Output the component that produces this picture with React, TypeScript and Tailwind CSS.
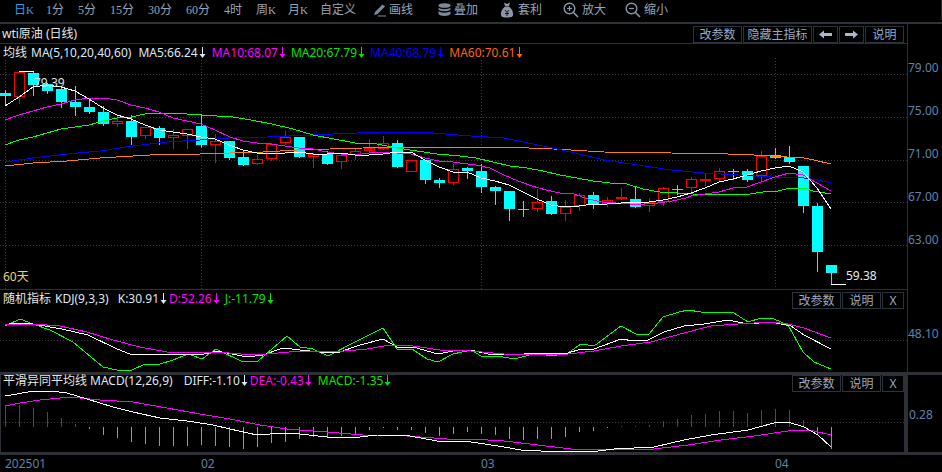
import React from "react";

type P = [number, number];

// [high, low, top, bottom, red?]
const C: [number, number, number, number, number][] = [
  [90,105,93,96,0],[72,104,72,97,1],[71,96,73,85,0],[83,94,84,91,0],[86,108,89,102,0],
  [86,116,102,107,0],[100,114,107,112,0],[106,126,112,124,0],[115,127,121,124,1],[115,145,121,137,0],
  [127,139,127,136,1],[126,145,128,138,0],[129,149,135,138,1],[129,149,129,136,1],[114,148,126,145,0],
  [134,163,141,145,1],[141,160,141,158,0],[150,166,157,165,0],[155,165,159,164,1],[143,161,144,159,1],
  [131,145,137,143,1],[137,158,137,157,0],[153,168,154,157,1],[151,165,154,164,0],[155,169,155,162,1],
  [148,160,151,155,1],[139,152,148,151,1],[136,150,143,149,1],[140,168,143,167,0],[160,172,160,172,1],
  [160,184,160,180,0],[178,188,180,183,0],[164,185,169,183,1],[167,179,168,171,0],[164,193,171,187,0],
  [186,205,187,191,0],[191,221,191,209,0],[201,217,209,210,0],[189,212,202,209,1],[196,215,201,214,0],
  [200,221,207,214,1],[193,211,195,206,1],[192,209,195,204,0],[197,207,200,204,1],[188,200,197,199,1],
  [186,208,199,207,0],[198,212,202,206,1],[187,206,188,202,1],[185,195,189,190,0],[177,193,179,188,1],
  [174,186,179,180,1],[168,182,171,179,1],[169,180,171,172,0],[169,182,171,180,0],[151,182,156,176,1],
  [148,159,155,158,0],[146,164,157,162,0],[166,213,166,206,0],[203,272,206,252,0],[265,284,265,273,0],
];

const MA5: P[] = [[5,106],[19,97],[33,87],[47,85],[61,87],[75,91],[89,99],[103,108],[117,115],[131,119],[145,125],[159,130],[173,132],[187,134],[201,137],[215,139],[229,145],[243,150],[257,153],[271,153],[285,153],[299,152],[313,154],[327,154],[341,153],[355,155],[369,155],[383,154],[397,152],[411,152],[425,160],[439,167],[453,172],[467,172],[481,178],[495,181],[509,185],[523,192],[537,199],[551,205],[565,207],[579,206],[593,204],[607,204],[621,203],[635,202],[649,202],[663,200],[677,197],[691,193],[705,188],[719,182],[733,179],[747,175],[761,171],[775,168],[789,166],[803,172],[817,188],[831,209]];
const MA10: P[] = [[5,120],[19,115],[33,111],[47,107],[61,104],[75,100],[89,98],[103,98],[117,100],[131,105],[145,108],[159,112],[173,118],[187,121],[201,124],[215,130],[230,137],[243,141],[257,143],[271,144],[285,146],[299,148],[313,149],[327,152],[341,154],[355,155],[369,153],[383,152],[397,153],[411,154],[425,158],[439,161],[453,162],[460,163],[476,165],[490,168],[504,175],[518,181],[532,186],[546,190],[560,193],[574,194],[588,199],[602,202],[616,203],[630,204],[644,204],[658,203],[672,201],[686,198],[691,196],[705,194],[719,192],[733,188],[747,187],[761,182],[775,177],[789,173],[803,175],[817,183],[831,191]];
const MA20: P[] = [[5,145],[19,140],[33,137],[47,133],[61,129],[75,127],[89,125],[103,121],[117,118],[131,117],[145,114],[159,113],[173,113],[201,115],[233,117],[251,120],[272,124],[293,129],[313,135],[334,139],[355,143],[377,144],[397,148],[417,151],[437,154],[460,156],[476,158],[493,162],[510,166],[527,168],[543,171],[560,175],[577,178],[593,181],[610,183],[627,184],[643,189],[660,192],[677,193],[693,194],[727,194],[750,194],[763,192],[778,191],[790,188],[805,188],[813,191],[831,194]];
const MA40: P[] = [[5,162],[33,158],[67,154],[100,151],[133,146],[167,142],[200,140],[230,138],[267,137],[333,134],[383,132],[433,133],[471,136],[504,138],[538,145],[571,152],[604,160],[638,165],[671,170],[704,173],[738,175],[771,177],[804,178],[818,180],[831,183]];
const MA60: P[] = [[5,166],[33,163],[67,161],[100,158],[133,156],[167,154],[200,154],[230,153],[263,152],[297,150],[330,149],[363,148],[397,147],[430,147],[471,147],[504,147],[554,149],[604,152],[671,153],[728,154],[754,155],[804,158],[814,160],[831,164]];

const K: P[] = [[5,325],[13,323],[33,324],[62,329],[88,335],[117,349],[130,354],[143,354],[160,355],[187,354],[200,355],[217,351],[247,357],[263,355],[283,348],[300,350],[320,352],[337,353],[360,345],[383,339],[397,347],[413,347],[438,354],[453,351],[471,350],[488,354],[514,355],[524,354],[538,353],[554,354],[568,353],[581,349],[594,349],[621,339],[634,341],[648,340],[664,332],[684,326],[704,324],[728,320],[748,324],[771,322],[791,326],[804,335],[831,349]];
const D: P[] = [[5,324],[33,324],[60,326],[87,332],[113,340],[140,347],[167,352],[200,353],[217,352],[253,355],[267,354],[300,351],[333,352],[367,349],[390,345],[413,346],[440,350],[471,351],[504,354],[531,354],[568,354],[594,351],[621,346],[651,342],[684,333],[711,326],[738,324],[771,322],[788,324],[804,328],[831,338]];
const J: P[] = [[5,326],[20,319],[33,324],[50,330],[73,342],[103,367],[117,370],[132,370],[145,364],[160,364],[173,360],[188,354],[202,359],[216,349],[243,362],[258,361],[287,336],[300,347],[313,349],[328,356],[357,341],[383,328],[397,349],[412,349],[427,359],[438,362],[453,354],[471,350],[481,356],[498,356],[514,359],[526,356],[536,353],[551,356],[568,353],[581,344],[594,346],[621,326],[636,334],[649,334],[663,317],[679,312],[688,310],[701,312],[728,312],[734,313],[748,322],[761,318],[774,319],[788,325],[803,352],[814,362],[831,369]];

const DIFF: P[] = [[5,396],[17,394],[33,391],[50,391],[67,393],[87,399],[113,407],[133,412],[160,418],[187,421],[213,425],[230,429],[257,435],[283,433],[300,434],[327,437],[360,437],[377,435],[410,436],[437,441],[471,442],[498,446],[521,450],[541,451],[598,451],[614,449],[654,447],[684,440],[711,435],[748,430],[774,423],[788,422],[804,427],[818,435],[831,447]];
const DEA: P[] = [[5,406],[20,403],[40,400],[70,397],[100,400],[133,402],[167,408],[200,414],[230,419],[260,425],[287,429],[327,432],[363,435],[393,435],[420,437],[447,439],[471,439],[504,441],[538,445],[571,449],[621,449],[654,449],[688,445],[721,440],[754,436],[788,431],[804,430],[814,431],[831,435]];
const BAR_BOT = [406,405,408,412,418,424,429,435,438,442,444,446,446,446,445,446,447,449,447,443,442,439,437,437,436,434,430,428,430,430,433,436,434,432,434,435,439,440,439,439,437,432,431,428,426,426,425,421,419,415,414,411,411,413,410,409,410,420,435,449];

const cx = (i: number) => Math.floor(5.67 + 14 * i);

function Line({ pts, color }: { pts: P[]; color: string }) {
  return <polyline points={pts.map((p) => p.join(",")).join(" ")} fill="none" stroke={color} strokeWidth={1} shapeRendering="crispEdges" />;
}

function Grid({ y }: { y: number }) {
  return <line x1={0} x2={907} y1={y + 0.5} y2={y + 0.5} stroke="#3a3a3a" strokeDasharray="1 2" />;
}

function VGrid({ x, y1, y2 }: { x: number; y1: number; y2: number }) {
  return <line x1={x + 0.5} x2={x + 0.5} y1={y1} y2={y2} stroke="#3a3a3a" strokeDasharray="1 2" />;
}

function Btns({ items }: { items: { t: React.ReactNode; w: string }[] }) {
  return (
    <div className="flex gap-[1px] h-[17px]">
      {items.map((b, i) => (
        <div key={i} className={`${b.w} h-[17px] border border-[#2b323c] flex items-center justify-center text-[12px] leading-none text-[#9aa9c2]`}>
          {b.t}
        </div>
      ))}
    </div>
  );
}

function Arrow({ dir }: { dir: "l" | "r" }) {
  return (
    <svg width="13" height="9" viewBox="0 0 13 9">
      <path d={dir === "l" ? "M0 4.5L5 0.5V3H13V6H5V8.5Z" : "M13 4.5L8 0.5V3H0V6H8V8.5Z"} fill="#a9b6cc" />
    </svg>
  );
}

function Dn() {
  return (
    <svg width="7" height="11" viewBox="0 0 7 11" className="inline-block ml-[1px] align-[-1px]">
      <path d="M3 0H4V7H6.5L3.5 11L0.5 7H3Z" fill="currentColor" />
    </svg>
  );
}

const tabs: [string, string, string, boolean?][] = [
  ["日", "K", "w-[46px] pl-[14px]", true],
  ["1分", "", "w-[32px]"],
  ["5分", "", "w-[32px]"],
  ["15分", "", "w-[38px]"],
  ["30分", "", "w-[38px]"],
  ["60分", "", "w-[38px]"],
  ["4时", "", "w-[32px]"],
  ["周", "K", "w-[32px]"],
  ["月", "K", "w-[32px]"],
  ["自定义", "", "w-[53px]"],
];

function Tool({ icon, t, w }: { icon: React.ReactNode; t: string; w: string }) {
  return (
    <div className={`flex items-center whitespace-nowrap ${w}`}>
      {icon}
      <span>{t}</span>
    </div>
  );
}

const Pencil = (
  <svg width="14" height="14" viewBox="0 0 14 14" className="mr-[2px]">
    <path d="M1 12L2 9L9.5 1.5L12 3.5L4.5 11L1 12Z" fill="#7d8a9c" />
    <path d="M5 13H13" stroke="#7d8a9c" strokeWidth="1" />
  </svg>
);
const Stack = (
  <svg width="13" height="14" viewBox="0 0 13 14" className="mr-[3px]">
    <ellipse cx="6.5" cy="2.5" rx="6" ry="2.3" fill="#7d8a9c" />
    <path d="M0.5 4.5C2 6.8 11 6.8 12.5 4.5V6.5C11 8.8 2 8.8 0.5 6.5Z" fill="#7d8a9c" />
    <path d="M0.5 8C2 10.3 11 10.3 12.5 8V11C11 13.6 2 13.6 0.5 11Z" fill="#7d8a9c" />
  </svg>
);
const Bag = (
  <svg width="14" height="16" viewBox="0 0 14 16" className="mr-[4px]">
    <path d="M4 0.5L7 2L10 0.5L9 4H5Z" fill="#8b97a8" />
    <path d="M5 4.5H9C12 7 13.5 10 13 13C12.7 15 11 15.5 7 15.5C3 15.5 1.3 15 1 13C0.5 10 2 7 5 4.5Z" fill="#8b97a8" />
    <path d="M5 8L7 10.5L9 8M7 10.5V14M5 11.5H9" stroke="#111" strokeWidth="1" fill="none" />
  </svg>
);
const Mag = ({ plus }: { plus: boolean }) => (
  <svg width="16" height="16" viewBox="0 0 16 16" className="mr-[3px]">
    <circle cx="6.5" cy="6.5" r="5.3" fill="none" stroke="#8b97a8" strokeWidth="1.4" />
    <path d="M10.5 10.5L15 15" stroke="#8b97a8" strokeWidth="1.6" />
    <path d="M4 6.5H9" stroke="#8b97a8" strokeWidth="1.2" />
    {plus && <path d="M6.5 4V9" stroke="#8b97a8" strokeWidth="1.2" />}
  </svg>
);

export default function App() {
  return (
    <div className="w-[942px] h-[472px] bg-black overflow-hidden flex flex-col font-['Noto_Sans','Noto_Sans_CJK_SC',sans-serif]">
      {/* toolbar */}
      <div className="h-[24px] shrink-0 border-b-2 border-[#2e3238] flex items-center text-[12px] text-[#9aa4b5] leading-none pb-[2px] whitespace-nowrap">
        {tabs.map(([t, k, w, a], i) => (
          <div key={i} className={`${w} font-['Liberation_Serif','Noto_Sans_CJK_SC',serif] ${a ? "text-[#2f9be8]" : ""}`}>
            {t}
            {k && <span className="text-[11px]">{k}</span>}
          </div>
        ))}
        <Tool icon={Pencil} t="画线" w="w-[65px]" />
        <Tool icon={Stack} t="叠加" w="w-[62px]" />
        <Tool icon={Bag} t="套利" w="w-[63px]" />
        <Tool icon={<Mag plus />} t="放大" w="w-[62px]" />
        <Tool icon={<Mag plus={false} />} t="缩小" w="w-[50px]" />
        <div className="ml-auto w-[1px] h-[20px] bg-[#2a2a2a]" />
      </div>

      {/* main row */}
      <div className="flex h-[266px] shrink-0">
        <div className="w-[907px] flex flex-col">
          <div className="h-[20px] border-b border-[#2b2f36] flex items-start justify-between pt-[2px] pr-[3px] pl-[2px] shrink-0">
            <span className="text-[12px] leading-[15px] text-[#e6e6e6]">wti原油 (日线)</span>
            <Btns items={[
              { t: "改参数", w: "w-[49px]" },
              { t: "隐藏主指标", w: "w-[69px]" },
              { t: <Arrow dir="l" />, w: "w-[25px]" },
              { t: <Arrow dir="r" />, w: "w-[25px]" },
              { t: "说明", w: "w-[39px]" },
            ]} />
          </div>
          <div className="relative h-[246px] border-b border-[#2b2f36]">
            <svg width="907" height="245" viewBox="0 44 907 245" className="block">
              <Grid y={74} /><Grid y={117} /><Grid y={160} /><Grid y={202} /><Grid y={245} />
              <VGrid x={5} y1={60} y2={289} /><VGrid x={201} y1={60} y2={289} /><VGrid x={481} y1={60} y2={289} /><VGrid x={775} y1={58} y2={289} />
              {C.map(([h, l, t, b, red], i) => {
                const x = cx(i);
                const col = red ? "#ff0000" : "#00ffff";
                return (
                  <g key={i} shapeRendering="crispEdges">
                    <rect x={x} y={h} width={1} height={l - h} fill={col} />
                    {red ? (
                      <rect x={x - 4.5} y={t + 0.5} width={10} height={Math.max(b - t - 1, 1)} fill="#000" stroke={col} />
                    ) : (
                      <rect x={x - 5} y={t} width={11} height={Math.max(b - t, 1)} fill={col} />
                    )}
                  </g>
                );
              })}
              <Line pts={MA60} color="#ff7f00" />
              <Line pts={MA40} color="#0000ff" />
              <Line pts={MA20} color="#00ff00" />
              <Line pts={MA10} color="#ff00ff" />
              <Line pts={MA5} color="#ffffff" />
              <rect x={19} y={71} width={15} height={1} fill="#fff" shapeRendering="crispEdges" />
              <rect x={831} y={284} width={15} height={1} fill="#fff" shapeRendering="crispEdges" />
            </svg>
            <div className="absolute left-[3px] top-[1px] flex items-center gap-[5px] text-[12px] leading-[16px] whitespace-nowrap">
              <span className="text-[#e6e6e6] mr-[-1px]">均线</span>
              <span className="text-[#dbe8f5]">MA(5,10,20,40,60)</span>
              <span className="text-[#dbe8f5] ml-[2px]">MA5:66.24<Dn /></span>
              <span className="text-[#ff00ff] ml-[1px]">MA10:68.07<Dn /></span>
              <span className="text-[#00e600]">MA20:67.79<Dn /></span>
              <span className="text-[#0000ff]">MA40:68.79<Dn /></span>
              <span className="text-[#ff6600]">MA60:70.61<Dn /></span>
            </div>
            <span className="absolute left-[34px] top-[31px] text-[12px] leading-[16px] text-[#e0e0e0]">79.39</span>
            <span className="absolute left-[846px] top-[224px] text-[12px] leading-[16px] text-[#e8e8e8]">59.38</span>
            <span className="absolute left-[3px] top-[225px] text-[12px] leading-[16px] text-[#e4d36a]">60天</span>
          </div>
        </div>
        <div className="flex-1 border-l border-[#2b2f36] pt-[36px] text-[12px] leading-[16px] text-[#5f83ad]">
          {["79.00", "75.00", "71.00", "67.00", "63.00"].map((v) => (
            <div key={v} className="h-[43px]">{v}</div>
          ))}
        </div>
      </div>

      {/* KDJ row */}
      <div className="flex h-[82px] shrink-0">
        <div className="relative w-[907px]">
          <svg width="907" height="82" viewBox="0 290 907 82" className="block">
            <Grid y={340} />
            <Line pts={J} color="#00ff00" />
            <Line pts={K} color="#ffffff" />
            <Line pts={D} color="#ff00ff" />
          </svg>
          <div className="absolute left-[3px] top-[1px] flex items-center text-[12px] leading-[16px] whitespace-nowrap">
            <span className="text-[#e6e6e6]">随机指标</span>
            <span className="text-[#dbe8f5] ml-[4px]">KDJ(9,3,3)</span>
            <span className="text-[#dbe8f5] ml-[9px]">K:30.91<Dn /></span>
            <span className="text-[#ff00ff] ml-[2px]">D:52.26<Dn /></span>
            <span className="text-[#00e600] ml-[5px]">J:-11.79<Dn /></span>
          </div>
          <div className="absolute right-[3px] top-[2px]">
            <Btns items={[
              { t: "改参数", w: "w-[49px]" },
              { t: "说明", w: "w-[39px]" },
              { t: "X", w: "w-[22px]" },
            ]} />
          </div>
        </div>
        <div className="flex-1 border-l border-[#2b2f36] pt-[36px] text-[12px] leading-[16px] text-[#5f83ad]">48.10</div>
      </div>

      {/* MACD row */}
      <div className="flex h-[83px] shrink-0 border-t-[3px] border-b-[3px] border-[#2e3238]">
        <div className="relative w-[907px] border-l-[1px] border-r-[3px] border-[#2e3238]">
          <svg width="903" height="77" viewBox="1 375 903 77" className="block">
            <Grid y={422} />
            {BAR_BOT.map((b, i) => {
              const red = i < 6 || (i >= 44 && i <= 57);
              const y1 = red ? b : 427;
              const y2 = red ? 427 : b;
              return <rect key={i} x={cx(i)} y={y1} width={1} height={y2 - y1} fill={red ? "#ff0000" : "#00ff00"} shapeRendering="crispEdges" />;
            })}
            <Line pts={DEA} color="#ff00ff" />
            <Line pts={DIFF} color="#ffffff" />
          </svg>
          <div className="absolute left-[2px] top-[-2px] flex items-center text-[12px] leading-[16px] whitespace-nowrap">
            <span className="text-[#e6e6e6]">平滑异同平均线</span>
            <span className="text-[#dbe8f5] ml-[3px]">MACD(12,26,9)</span>
            <span className="text-[#dbe8f5] ml-[11px]">DIFF:-1.10<Dn /></span>
            <span className="text-[#ff00ff] ml-[2px]">DEA:-0.43<Dn /></span>
            <span className="text-[#00e600] ml-[6px]">MACD:-1.35<Dn /></span>
          </div>
          <div className="absolute right-[0px] top-[0px]">
            <Btns items={[
              { t: "改参数", w: "w-[49px]" },
              { t: "说明", w: "w-[39px]" },
              { t: "X", w: "w-[22px]" },
            ]} />
          </div>
        </div>
        <div className="flex-1 border-l border-[#2b2f36] pt-[32px] pl-[1px] text-[12px] leading-[16px] text-[#5f83ad]">0.28</div>
      </div>

      {/* x axis */}
      <div className="flex-1 flex items-center pl-[5px] text-[12px] leading-none text-[#5f83ad]">
        <div className="w-[196px]">202501</div>
        <div className="w-[280px]">02</div>
        <div className="w-[294px]">03</div>
        <div>04</div>
      </div>
    </div>
  );
}
